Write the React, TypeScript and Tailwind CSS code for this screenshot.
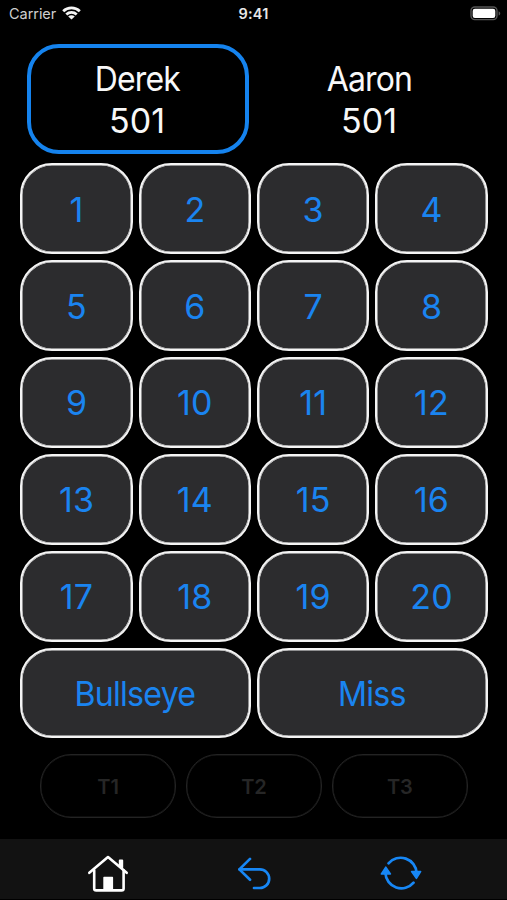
import type { ReactNode } from "react";

function Player({ name, score, active }: { name: string; score: number; active?: boolean }) {
  return (
    <div
      className={`flex h-[110px] w-[222px] flex-col items-center rounded-[32px] border-4 pt-[10px] text-[34px] leading-[42px] text-[#f8f8f8] ${
        active ? "border-[#1583ee]" : "border-transparent"
      }`}
    >
      <span className="inline-block scale-x-[0.94] pr-px tracking-[-0.9px]">{name}</span>
      <span className="pr-[2px] tracking-[0.1px]">{score}</span>
    </div>
  );
}

function Key({ children, wide }: { children: ReactNode; wide?: boolean }) {
  return (
    <button
      className={`flex items-center justify-center rounded-[32px] border-2 border-[#f4f4f4] bg-[#2c2c2e] pt-[2px] text-[34px] leading-[42px] text-[#1a84f0] shadow-[inset_0_0_0_0.5px_#f4f4f4] ${
        wide ? "col-span-2 tracking-[-0.8px]" : "tracking-[0.1px]"
      }`}
    >
      {wide ? <span className="inline-block scale-x-[0.945] pr-px">{children}</span> : children}
    </button>
  );
}

function StatusBar() {
  return (
    <header className="grid h-7 grid-cols-3 items-center pl-[9px] pr-[6px] text-[#e8e8e8]">
      <div className="flex items-center gap-[6px]">
        <span className="text-[14.5px] leading-7 tracking-[-0.05px] text-[#cfcfcf]">Carrier</span>
        <svg width="19" height="14" viewBox="0 0 19 14" className="mb-[2px]" fill="none" stroke="#f4f4f4" strokeWidth="2.8">
          <path d="M1.2 5.2C5.8.8 13.2.8 17.8 5.2" />
          <path d="M4.3 8.4c2.9-2.8 7.5-2.8 10.4 0" />
          <path d="M9.5 13.6 6.2 10.4c1.8-1.7 4.8-1.7 6.6 0z" fill="#f4f4f4" stroke="none" />
        </svg>
      </div>
      <span className="pr-[3px] text-center text-[14.5px] font-semibold leading-7 tracking-[0.2px]">9:41</span>
      <svg width="31" height="15" viewBox="0 0 31 15" className="mb-[2px] justify-self-end">
        <rect x="1" y="1" width="26" height="12.6" rx="3.8" fill="none" stroke="#555" strokeWidth="1.4" />
        <rect x="2.7" y="2.7" width="22.6" height="9.2" rx="2.2" fill="#fff" />
        <path d="M28.6 5.2c2.2.8 2.2 3.6 0 4.4z" fill="#555" />
      </svg>
    </header>
  );
}

function HomeIcon() {
  return (
    <svg width="42" height="38" viewBox="0 0 42 38" fill="none" stroke="#fff" strokeWidth="2.6" strokeLinecap="round" strokeLinejoin="round">
      <path d="M2.3 18.8 21 3l18.7 15.8" />
      <path d="M7.2 16.2v18.2a2 2 0 0 0 2 2h25.4a2 2 0 0 0 2-2V16.2" />
      <path d="M32.8 11V6.6h2.4v7z" fill="#fff" strokeWidth="2" />
      <path d="M17 23.4h8.4v12H17z" fill="#fff" strokeWidth="1.4" />
    </svg>
  );
}

function UndoIcon() {
  return (
    <svg width="34" height="33" viewBox="0 0 34 33" fill="none" stroke="#1787f5" strokeWidth="2.7" strokeLinecap="round" strokeLinejoin="round">
      <path d="M13 1.9 2.4 12.4 13 22.8" />
      <path d="M2.6 12.4h20.3a9.3 9.3 0 0 1 0 18.6H17" />
    </svg>
  );
}

function RestartIcon() {
  return (
    <svg width="42" height="38" viewBox="0 0 42 38" fill="none" stroke="#1787f5" strokeWidth="2.7" strokeLinecap="round">
      <path d="M8.5 9.3A16 16 0 0 1 36.6 19" />
      <path d="M33.6 28.7A16 16 0 0 1 5.4 19" />
      <path d="M31.6 17.6h9L36.4 24.4z" fill="#1787f5" strokeWidth="1.6" strokeLinejoin="round" />
      <path d="M1.4 20h9L5.8 13.2z" fill="#1787f5" strokeWidth="1.6" strokeLinejoin="round" />
    </svg>
  );
}

const numbers = Array.from({ length: 20 }, (_, i) => i + 1);

export default function App() {
  return (
    <div className="flex h-[900px] w-[507px] flex-col overflow-hidden bg-black font-[Inter,sans-serif]">
      <StatusBar />
      <section className="mt-4 flex gap-[10px] pl-[27px]">
        <Player name="Derek" score={501} active />
        <Player name="Aaron" score={501} />
      </section>
      <main className="ml-[20.4px] mt-[9.4px] grid h-[575px] w-[467.2px] shrink-0 grid-cols-4 grid-rows-6 gap-[6.2px]">
        {numbers.map((n) => (
          <Key key={n}>{n}</Key>
        ))}
        <Key wide>Bullseye</Key>
        <Key wide>Miss</Key>
      </main>
      <section className="mx-[40px] mt-[15.6px] grid h-[64px] w-[428px] grid-cols-3 gap-[9.6px]">
        {["T1", "T2", "T3"].map((label) => (
          <div
            key={label}
            className="flex items-center justify-center rounded-[31px] border border-[#232323] pt-[2px] text-[20px] font-semibold text-[#262626] shadow-[inset_0_0_0_0.5px_#1c1c1c]"
          >
            {label}
          </div>
        ))}
      </section>
      <nav className="mt-auto flex h-[61px] shrink-0 border-b border-black bg-[#121212] pl-[35px] pr-[33px] pt-[15px]">
        <div className="flex flex-1 justify-center">
          <HomeIcon />
        </div>
        <div className="flex flex-1 justify-center pt-[3px]">
          <UndoIcon />
        </div>
        <div className="flex flex-1 justify-center">
          <RestartIcon />
        </div>
      </nav>
    </div>
  );
}
